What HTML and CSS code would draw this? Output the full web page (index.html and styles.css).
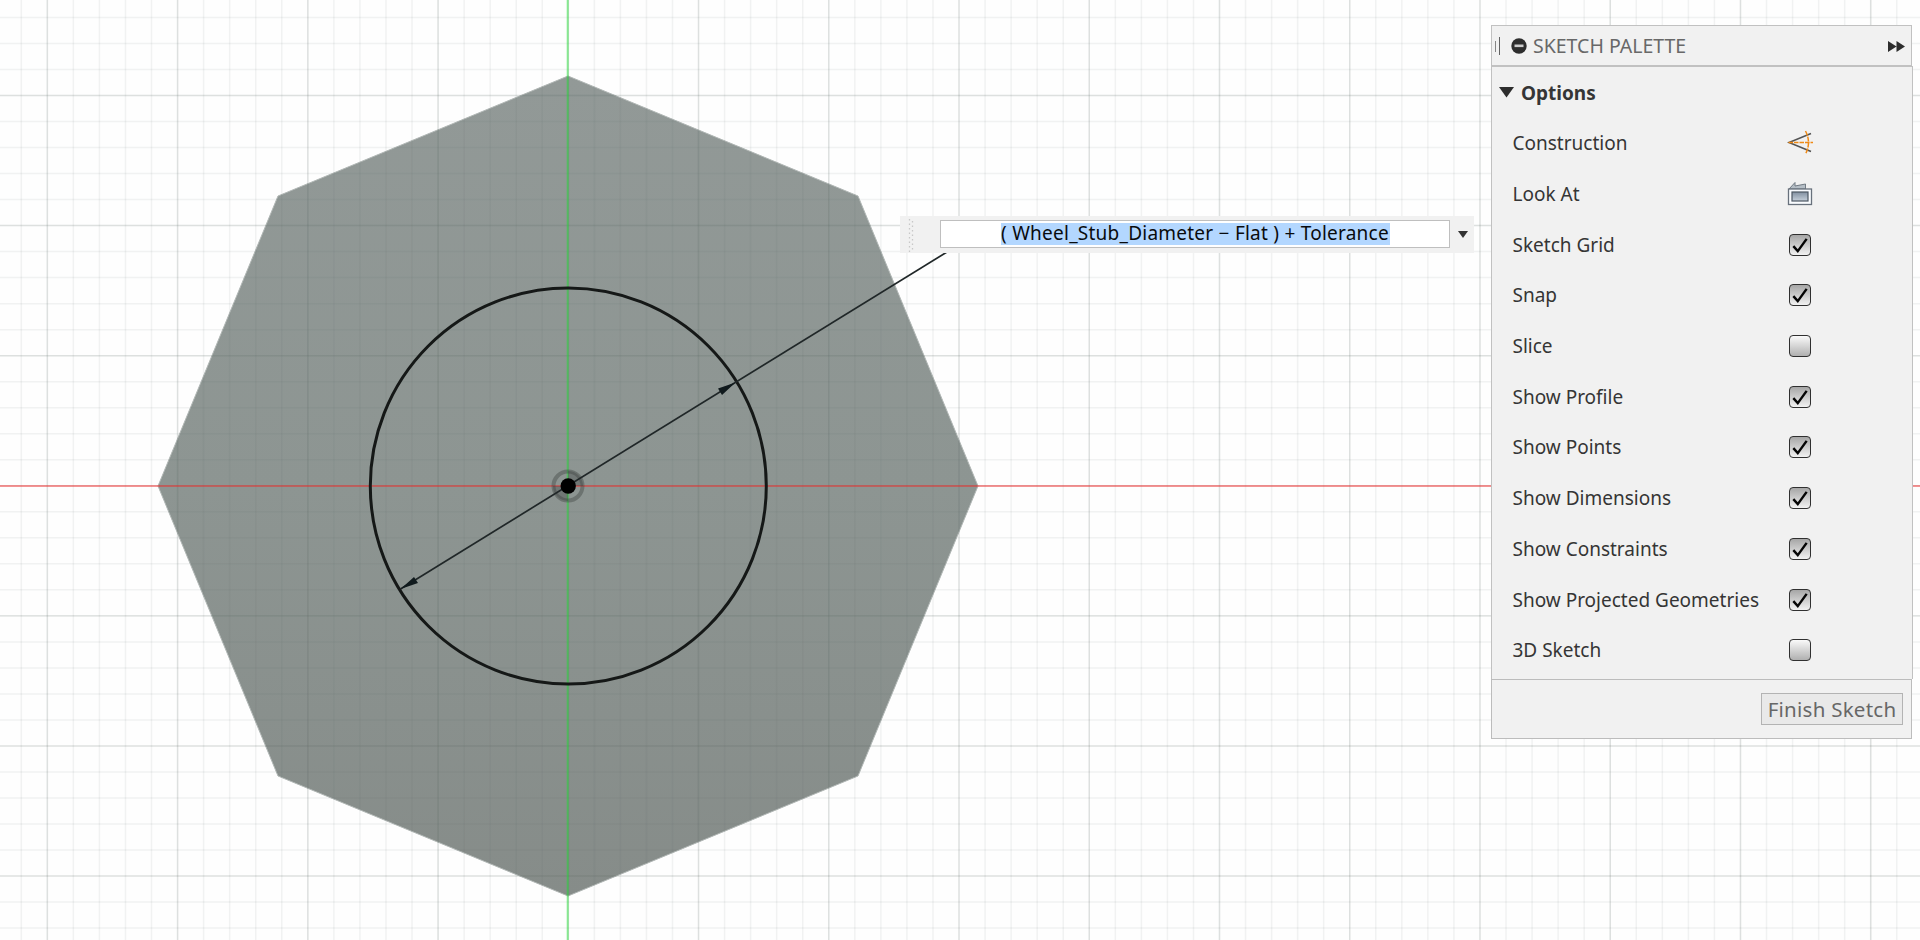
FILE: index.html
```html
<!DOCTYPE html>
<html lang="en">
<head>
<meta charset="utf-8">
<title>Sketch</title>
<link rel="stylesheet" href="styles.css">
</head>
<body>
<main class="viewport">
  <svg class="canvas" width="1920" height="940" viewBox="0 0 1920 940">
    <defs>
      <linearGradient id="face" x1="0" y1="0" x2="0" y2="1">
        <stop offset="0" stop-color="#929997"/>
        <stop offset="0.5" stop-color="#8d9592"/>
        <stop offset="1" stop-color="#868c89"/>
      </linearGradient>
    </defs>
    <path class="face" d="M568 76 858 196 978 486 858 776 568 896 278 776 158 486 278 196Z"/>
    <!-- grid lines are the dashes of very wide strokes -->
    <path class="minor" stroke-width="940" stroke-dasharray="1.5 24.548" d="M-5.5 470H1920"/>
    <path class="minor" stroke-width="1920" stroke-dasharray="1.5 24.52" d="M960 -9.35V940"/>
    <path class="major" stroke-width="940" stroke-dasharray="1.5 128.74" d="M-83.64 470H1920"/>
    <path class="major" stroke-width="1920" stroke-dasharray="1.5 128.6" d="M960 -35.400V940"/>
    <path class="axis-x" d="M0 486H1920"/>
    <path class="axis-y" d="M567.7 0V940"/>
    <circle class="halo" cx="568" cy="486" r="14.500"/>
    <path class="halo-fill" d="M568 486V471A15 15 0 0 1 583 486ZM568 486V501A15 15 0 0 1 553 486Z"/>
    <circle class="profile" cx="568.3" cy="486" r="198"/>
    <path class="dimension" d="M400.5 589 947 252"/>
    <path class="arrow" d="M400.5 589 414 577 418 583ZM735.5 382.5 718 388.5 722 395Z"/>
    <circle cx="568.2" cy="486" r="7.7"/>
  </svg>

  <div class="value-editor">
    <svg class="grip" width="6" height="34" viewBox="0 0 6 34"><path d="M1.5 1V34M4.5 3V34"/></svg>
    <div class="value-field"><span class="selection">( Wheel_Stub_Diameter − Flat ) + Tolerance</span></div>
    <svg class="caret" width="10" height="7" viewBox="0 0 10 7"><path d="M0 0H10L5 7Z"/></svg>
  </div>

  <aside class="palette">
    <header class="palette-header">
      <span class="handle"></span>
      <svg class="collapse" width="16" height="16" viewBox="0 0 16 16"><circle cx="8" cy="8" r="7.7"/><rect x="3.5" y="6.5" width="9" height="2.6"/></svg>
      <h1 class="title">SKETCH PALETTE</h1>
      <svg class="forward" width="17" height="11" viewBox="0 0 17 11"><path d="M0 0 8.5 5.5 0 11ZM8.5 0 17 5.5 8.5 11Z"/></svg>
    </header>
    <section class="options">
      <h2 class="section-title"><svg width="15" height="11" viewBox="0 0 15 11"><path d="M0 0H15L7.5 10.5Z"/></svg><span>Options</span></h2>
      <div class="row"><span class="label">Construction</span>
        <svg class="tool" width="26" height="26" viewBox="0 0 26 26">
          <path class="wedge" d="M24 3.5 2 12.5 24 21.5"/>
          <path class="guide" d="M1.5 12.5H26" stroke-dasharray="4.5 1"/>
          <path class="guide" d="M18.5 1Q24.5 12.5 18.5 24" stroke-dasharray="5 1"/>
        </svg></div>
      <div class="row"><span class="label">Look At</span>
        <svg class="tool" width="26" height="26" viewBox="0 0 26 26">
          <defs><linearGradient id="screen" x1="0" y1="0" x2="0" y2="1"><stop offset="0" stop-color="#8290a1"/><stop offset="1" stop-color="#c6d0da"/></linearGradient></defs>
          <path d="M2 8 8 1.5V5L18.500 3V8Z" fill="#b5bec6" stroke="#717a83"/>
          <rect x="1.500" y="8" width="23" height="15.500" fill="#fafcff" stroke="#68717c" stroke-width="1.300"/>
          <rect x="5" y="11" width="16" height="9" fill="url(#screen)" stroke="#4d5763" stroke-width="1.200"/>
        </svg></div>
      <div class="row"><span class="label">Sketch Grid</span><span class="check on"><svg viewBox="0 0 18 18"><path d="M3 10 7 14.500 15 3.500"/></svg></span></div>
      <div class="row"><span class="label">Snap</span><span class="check on"><svg viewBox="0 0 18 18"><path d="M3 10 7 14.500 15 3.500"/></svg></span></div>
      <div class="row"><span class="label">Slice</span><span class="check"></span></div>
      <div class="row"><span class="label">Show Profile</span><span class="check on"><svg viewBox="0 0 18 18"><path d="M3 10 7 14.500 15 3.500"/></svg></span></div>
      <div class="row"><span class="label">Show Points</span><span class="check on"><svg viewBox="0 0 18 18"><path d="M3 10 7 14.500 15 3.500"/></svg></span></div>
      <div class="row"><span class="label">Show Dimensions</span><span class="check on"><svg viewBox="0 0 18 18"><path d="M3 10 7 14.500 15 3.500"/></svg></span></div>
      <div class="row"><span class="label">Show Constraints</span><span class="check on"><svg viewBox="0 0 18 18"><path d="M3 10 7 14.500 15 3.500"/></svg></span></div>
      <div class="row"><span class="label">Show Projected Geometries</span><span class="check on"><svg viewBox="0 0 18 18"><path d="M3 10 7 14.500 15 3.500"/></svg></span></div>
      <div class="row"><span class="label">3D Sketch</span><span class="check"></span></div>
    </section>
    <footer class="palette-footer"><button class="finish" type="button">Finish Sketch</button></footer>
  </aside>
</main>
</body>
</html>
```
FILE: styles.css
```css
* { box-sizing: border-box; }
body { margin: 0; background: #fefefe; font-family: "Noto Sans", "Open Sans", sans-serif; }
h1, h2 { margin: 0; font-size: inherit; }
.viewport { position: relative; width: 1920px; height: 940px; overflow: hidden; }
.canvas { display: block; }
.canvas path, .canvas circle { shape-rendering: geometricPrecision; }
.face { fill: url(#face); stroke: #b1b7b5; stroke-width: 1; }
.minor { fill: none; stroke: rgba(95, 105, 102, .08); }
.major { fill: none; stroke: rgba(95, 105, 102, .13); }
.axis-x { stroke: rgba(250, 40, 40, .46); stroke-width: 2; }
.axis-y { stroke: rgba(30, 225, 50, .5); stroke-width: 2; }
.halo { fill: none; stroke: rgba(60, 64, 63, .4); stroke-width: 4; }
.halo-fill { fill: rgba(60, 64, 63, .35); }
.profile { fill: none; stroke: #151817; stroke-width: 3; }
.dimension { stroke: #202728; stroke-width: 1.7; }
.arrow { fill: #101a1d; }

.value-editor { position: absolute; left: 900px; top: 216px; width: 574px; height: 37px; display: flex; align-items: center; background: #f1f1f1; padding-left: 8px; }
.grip path { fill: none; stroke: #c8c8c8; stroke-width: 1.3; stroke-dasharray: 1.5 3; }
.value-field { width: 510px; height: 28px; margin: 0 8px 1px 26px; border: 1.5px solid #bfbfbf; background: #fff; display: flex; justify-content: center; align-items: center; }
.selection { width: 389px; height: 22px; line-height: 21px; background: #b3d7ff; color: #090b0d; font-size: 19px; letter-spacing: .24px; white-space: pre; text-align: center; }
.caret { fill: #333; }

.palette { position: absolute; left: 1491px; top: 25px; width: 422px; color: #353535; }
.palette-header { width: 421px; height: 41px; border: 1px solid #c1c1c1; background: #f1f1f1; display: flex; align-items: center; }
.handle { width: 5px; height: 18px; margin-left: 3px; border-right: 1.5px solid #626262; background: linear-gradient(#858585, #858585) 0 4px / 1px 11px no-repeat; }
.collapse { margin-left: 11px; fill: #2d2d2d; }
.collapse rect { fill: #ccc; }
.title { margin-left: 6px; font-size: 19.5px; font-weight: 400; line-height: 38px; color: #686868; white-space: nowrap; }
.forward { margin: 2px 6px 0 auto; fill: #2d2d2d; }
.options { height: 613px; border: 1px solid #c1c1c1; border-width: 1px 1px 0; background: #f1f1f1; }
.section-title { height: 51px; display: flex; align-items: center; gap: 7px; padding-left: 7px; font-size: 19px; font-weight: 700; }
.section-title svg { fill: #2d2d2d; }
.row { height: 50.7px; display: grid; grid-template-columns: 274px 26px; align-items: center; padding-left: 20.5px; font-size: 19px; }
.label { white-space: nowrap; }
.tool { fill: none; }
.wedge { stroke: #545454; stroke-width: 1.6; }
.guide { stroke: #f08a16; stroke-width: 1.5; }
.check { width: 22px; height: 22px; margin-left: 2px; border: 1.5px solid #303030; border-radius: 4px; background: linear-gradient(#fafafa, #b0b0b0); }
.check.on { background: linear-gradient(#a6a6a6, #f2f2f2); }
.check svg { display: block; width: 20px; height: 20px; }
.check path { fill: none; stroke: #050505; stroke-width: 2.2; }
.palette-footer { width: 421px; height: 60px; border: 1px solid #bcbcbc; background: #f1f1f1; display: flex; justify-content: flex-end; align-items: center; padding-right: 8px; }
.finish { width: 142px; height: 32px; padding: 0; border: 1.5px solid #b3b3b3; background: #e9e9e9; font-family: inherit; font-size: 20.5px; letter-spacing: .25px; line-height: 28px; color: #676767; white-space: nowrap; }
```
